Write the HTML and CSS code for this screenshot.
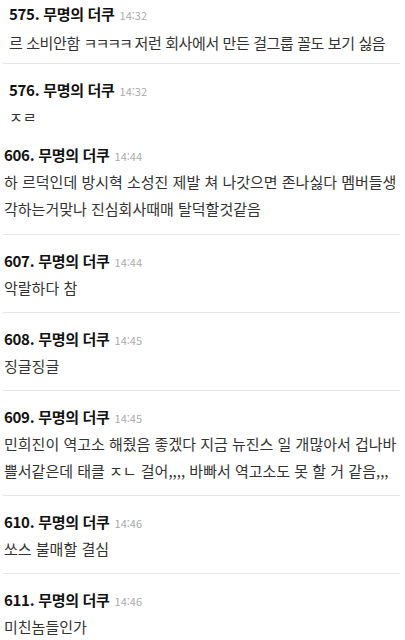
FILE: index.html
```html
<!DOCTYPE html>
<html lang="ko">
<head>
  <meta charset="UTF-8">
  <title>무명의 더쿠 댓글</title>
  <link rel="stylesheet" href="styles.css">
</head>
<body>
  <div class="comments top-part">
    <div class="comment first">
      <div class="comment-head"><span class="name">575. 무명의 더쿠</span><span class="time">14:32</span></div>
      <p class="comment-body tight">르 소비안함 <span class="jamo">ㅋㅋㅋㅋ</span> 저런 회사에서 만든 걸그룹 꼴도 보기 싫음</p>
    </div>
    <div class="comment last">
      <div class="comment-head"><span class="name">576. 무명의 더쿠</span><span class="time">14:32</span></div>
      <p class="comment-body">ㅈㄹ</p>
    </div>
  </div>
  <div class="comments">
    <div class="comment first">
      <div class="comment-head"><span class="name">606. 무명의 더쿠</span><span class="time">14:44</span></div>
      <p class="comment-body">하 르덕인데 방시혁 소성진 제발 쳐 나갓으면 존나싫다 멤버들생각하는거맞나 진심회사때매 탈덕할것같음</p>
    </div>
    <div class="comment">
      <div class="comment-head"><span class="name">607. 무명의 더쿠</span><span class="time">14:44</span></div>
      <p class="comment-body">악랄하다 참</p>
    </div>
    <div class="comment">
      <div class="comment-head"><span class="name">608. 무명의 더쿠</span><span class="time">14:45</span></div>
      <p class="comment-body">징글징글</p>
    </div>
    <div class="comment">
      <div class="comment-head"><span class="name">609. 무명의 더쿠</span><span class="time">14:45</span></div>
      <p class="comment-body">민희진이 역고소 해줬음 좋겠다 지금 뉴진스 일 개많아서 겁나바쁠서같은데 태클 ㅈㄴ 걸어,,,, 바빠서 역고소도 못 할 거 같음,,,</p>
    </div>
    <div class="comment">
      <div class="comment-head"><span class="name">610. 무명의 더쿠</span><span class="time">14:46</span></div>
      <p class="comment-body">쏘스 불매할 결심</p>
    </div>
    <div class="comment">
      <div class="comment-head"><span class="name">611. 무명의 더쿠</span><span class="time">14:46</span></div>
      <p class="comment-body">미친놈들인가</p>
    </div>
  </div>
</body>
</html>
```

FILE: styles.css
```css
body {
  margin: 0;
  background: #fff;
  font-family: "Noto Sans CJK KR", "Noto Sans", sans-serif;
  color: #333;
}
.comments {
  padding: 0 5px 0 3px;
}
.comment {
  padding: 16px 0 11px 1px;
  border-bottom: 1px solid #e4e4e4;
}
.top-part .comment {
  padding-left: 6px;
}
.top-part .comment.first {
  padding-top: 4px;
  padding-bottom: 7px;
}
.top-part .comment.first .comment-body {
  margin-top: 5px;
}
.top-part .comment.last {
  border-bottom: none;
}
.comments .comment.first {
  padding-top: 4px;
}
.comments .comment.first:not(.top-part .comment) {
  padding-bottom: 12px;
}
.comment-head {
  display: flex;
  align-items: baseline;
  gap: 5px;
  height: 20px;
  line-height: 20px;
}
.name {
  font-size: 15px;
  font-weight: bold;
  color: #111;
  letter-spacing: -0.3px;
}
.time {
  font-size: 11px;
  color: #aaa;
}
.comment-body {
  margin: 3px 0 0;
  font-size: 15px;
  line-height: 27px;
  color: #333;
}
.tight {
  letter-spacing: -0.4px;
}
.jamo {
  letter-spacing: -2px;
}
```
